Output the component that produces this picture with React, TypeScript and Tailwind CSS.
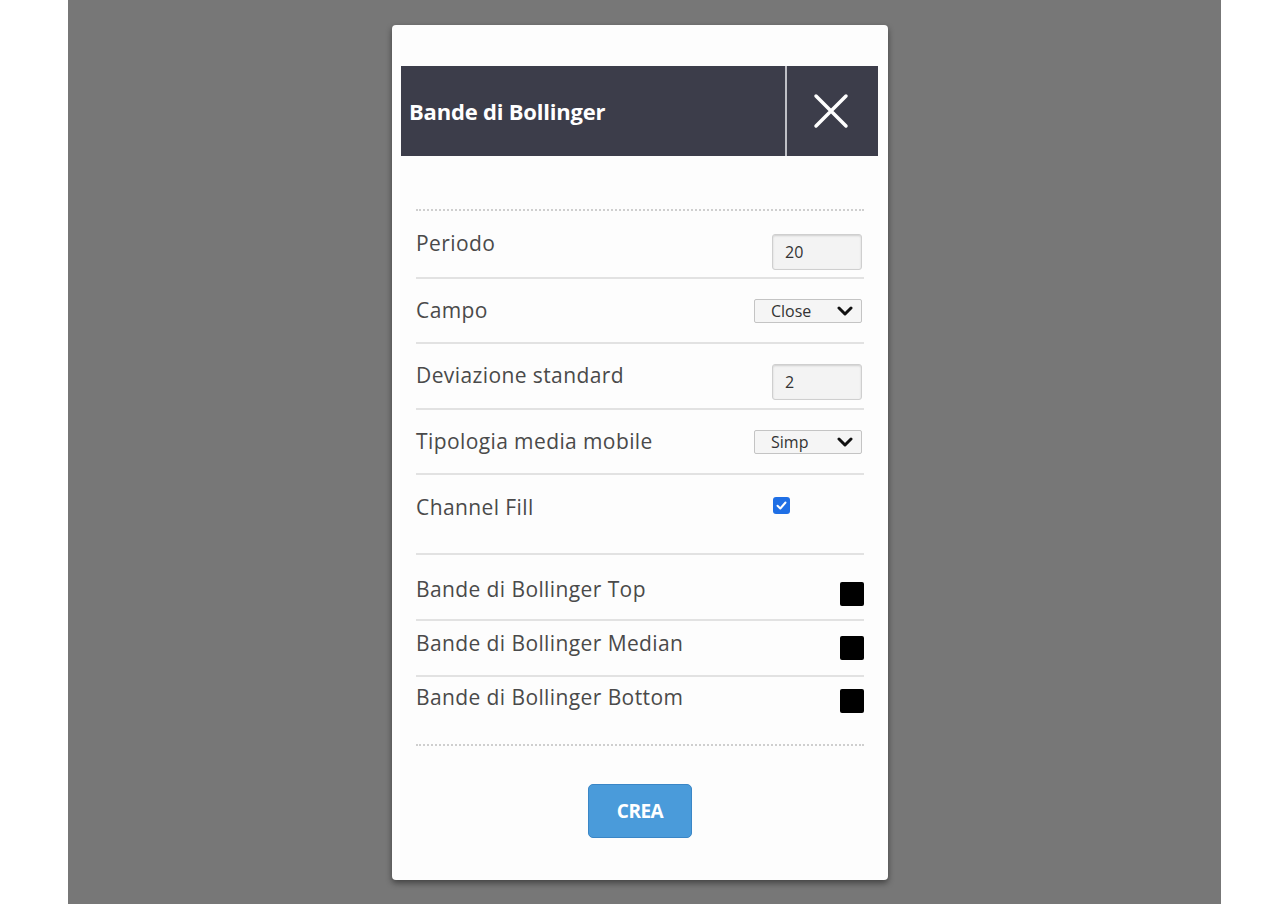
import React from "react";

const font = { fontFamily: '"Open Sans", "Liberation Sans", sans-serif' };

function Chevron() {
  return (
    <svg width="16" height="12" viewBox="0 0 16 12" className="shrink-0">
      <path d="M2 3 L8 9 L14 3" fill="none" stroke="#111" strokeWidth="3" strokeLinecap="round" strokeLinejoin="round" />
    </svg>
  );
}

function Field({ value, className = "" }: { value: string; className?: string }) {
  return (
    <div className={`mr-[2px] flex h-[36px] w-[90px] items-center rounded-[3px] border border-[#cfcfcf] bg-[#f3f3f3] pl-[12px] text-[16px] text-[#333] shadow-[inset_0_1px_2px_rgba(0,0,0,0.15)] ${className}`}>
      {value}
    </div>
  );
}

function Select({ value }: { value: string }) {
  return (
    <div className="mr-[2px] flex h-[24px] w-[108px] items-center justify-between rounded-[2px] border border-[#c4c4c4] bg-[#f5f5f5] pl-[16px] pr-[8px] text-[16px] text-[#333]">
      <span className="leading-none">{value}</span>
      <Chevron />
    </div>
  );
}

function Sep() {
  return <div className="h-[2px] bg-[#e2e2e2]" />;
}

function Label({ children, className = "" }: { children: React.ReactNode; className?: string }) {
  return <span className={`text-[21px] tracking-[0.4px] text-[#4a4a4a] ${className}`}>{children}</span>;
}

function Swatch({ className = "" }: { className?: string }) {
  return <div className={`h-[24px] w-[24px] rounded-[2px] bg-black ${className}`} />;
}

export default function App() {
  return (
    <div className="flex h-[904px] bg-white pl-[68px] pr-[59px]" style={font}>
      <div className="h-full flex-1 bg-[#777777] pl-[324px] pt-[25px]">
        <div className="flex h-[855px] w-[496px] flex-col rounded-[4px] bg-[#fdfdfd] shadow-[0_3px_6px_rgba(0,0,0,0.45)]">
          {/* header */}
          <div className="ml-[9px] mr-[10px] mt-[41px] flex h-[90px] bg-[#3c3d4a]">
            <div className="flex flex-1 items-center pl-[8px] text-[22px] font-bold tracking-[-0.2px] text-white">
              Bande di Bollinger
            </div>
            <div className="w-[2px] bg-[#bfc0c6]" />
            <div className="flex w-[91px] items-center justify-center pr-[3px]">
              <svg width="36" height="36" viewBox="0 0 36 36">
                <path d="M3 3 L33 33 M33 3 L3 33" stroke="white" strokeWidth="3.5" strokeLinecap="round" />
              </svg>
            </div>
          </div>

          <div className="mt-[53px] px-[24px]">
            <div className="border-t-2 border-dotted border-[#cfcfcf]" />
            <div className="flex h-[66px] items-center justify-between">
              <Label>Periodo</Label>
              <Field value="20" className="mt-[16px]" />
            </div>
            <Sep />
            <div className="flex h-[63px] items-center justify-between">
              <Label>Campo</Label>
              <Select value="Close" />
            </div>
            <Sep />
            <div className="flex h-[64px] items-center justify-between">
              <Label>Deviazione standard</Label>
              <Field value="2" className="mt-[12px]" />
            </div>
            <Sep />
            <div className="flex h-[63px] items-center justify-between">
              <Label>Tipologia media mobile</Label>
              <Select value="Simp" />
            </div>
            <Sep />
            <div className="flex h-[78px] items-start justify-between pt-[17px]">
              <Label>Channel Fill</Label>
              <div className="mr-[74px] mt-[5px] flex h-[17px] w-[17px] items-center justify-center rounded-[3px] bg-[#1f6fe5]">
                <svg width="13" height="13" viewBox="0 0 13 13">
                  <path d="M2.5 6.8 L5.3 9.5 L10.5 3.5" fill="none" stroke="white" strokeWidth="2" strokeLinecap="round" strokeLinejoin="round" />
                </svg>
              </div>
            </div>
            <Sep />
            <div className="flex h-[64px] items-center justify-between">
              <Label className="mt-[6px]">Bande di Bollinger Top</Label>
              <Swatch className="mt-[14px]" />
            </div>
            <Sep />
            <div className="flex h-[54px] items-center justify-between">
              <Label className="mb-[8px]">Bande di Bollinger Median</Label>
              <Swatch />
            </div>
            <Sep />
            <div className="flex h-[50px] items-center justify-between">
              <Label className="mb-[8px]">Bande di Bollinger Bottom</Label>
              <Swatch className="mb-[2px]" />
            </div>
            <div className="mt-[17px] border-t-2 border-dotted border-[#cfcfcf]" />
          </div>

          <div className="mt-[38px] flex justify-center">
            <button className="flex h-[54px] w-[104px] items-center justify-center rounded-[5px] border border-[#3a86c6] bg-[#4a9bda] text-[19px] font-bold tracking-[-0.5px] text-white">
              CREA
            </button>
          </div>
        </div>
      </div>
    </div>
  );
}
